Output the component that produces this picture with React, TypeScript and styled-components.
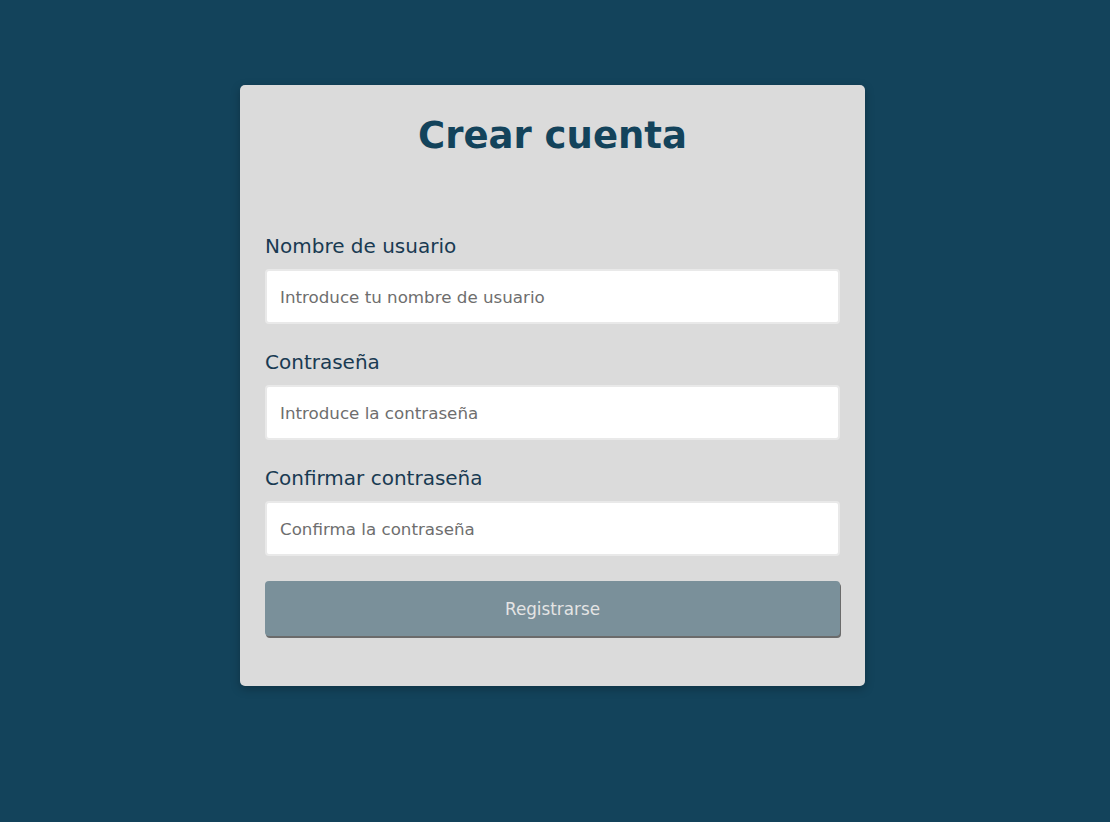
import styled, { createGlobalStyle } from 'styled-components';

const GlobalStyle = createGlobalStyle`
    html, body {
        margin: 0;
        padding: 0;
        background: #13435b;
        font-family: "DejaVu Sans", "Noto Sans", sans-serif;
    }
    * { box-sizing: border-box; }
`;

const Page = styled.div`
    width: 100%;
    min-height: 822px;
    display: flex;
    justify-content: center;
    align-items: flex-start;
    padding: 85px 5px 0 0;
`;

const Card = styled.form`
    width: 625px;
    background: #dbdbdb;
    border-radius: 5px;
    box-shadow: 0 3px 10px rgba(0, 0, 0, 0.25);
    padding: 24px 25px 50px;
    display: flex;
    flex-direction: column;
`;

const Title = styled.h1`
    margin: 0 0 70px;
    text-align: center;
    color: #13435b;
    font-size: 37px;
    font-weight: 700;
    line-height: 54px;
`;

const Field = styled.div`
    display: flex;
    flex-direction: column;
    margin-bottom: 25px;
`;

const Label = styled.label`
    color: #193a52;
    font-size: 20px;
    line-height: 26px;
    margin-bottom: 10px;
`;

const Input = styled.input`
    height: 55px;
    width: 100%;
    border: 2px solid #e9e9e9;
    border-radius: 4px;
    background: #fff;
    padding: 0 13px;
    font-family: inherit;
    font-size: 16.7px;
    color: #333;
    outline: none;
    &::placeholder {
        color: #6e6e6e;
    }
`;

const Button = styled.button`
    height: 55px;
    width: 100%;
    border: none;
    border-radius: 4px;
    background: #7a909a;
    box-shadow: 1px 2px 0 #6b6b6b;
    color: #e4e4e4;
    font-family: inherit;
    font-size: 16.8px;
    font-weight: 500;
    cursor: pointer;
`;

const fields = [
    { id: 'username', label: 'Nombre de usuario', type: 'text', placeholder: 'Introduce tu nombre de usuario' },
    { id: 'password', label: 'Contraseña', type: 'password', placeholder: 'Introduce la contraseña' },
    { id: 'confirm', label: 'Confirmar contraseña', type: 'password', placeholder: 'Confirma la contraseña' },
];

export default function App() {
    return (
        <>
            <GlobalStyle />
            <Page>
                <Card onSubmit={(e) => e.preventDefault()}>
                    <Title>Crear cuenta</Title>
                    {fields.map((f) => (
                        <Field key={f.id}>
                            <Label htmlFor={f.id}>{f.label}</Label>
                            <Input id={f.id} type={f.type} placeholder={f.placeholder} />
                        </Field>
                    ))}
                    <Button type="submit">Registrarse</Button>
                </Card>
            </Page>
        </>
    );
}
